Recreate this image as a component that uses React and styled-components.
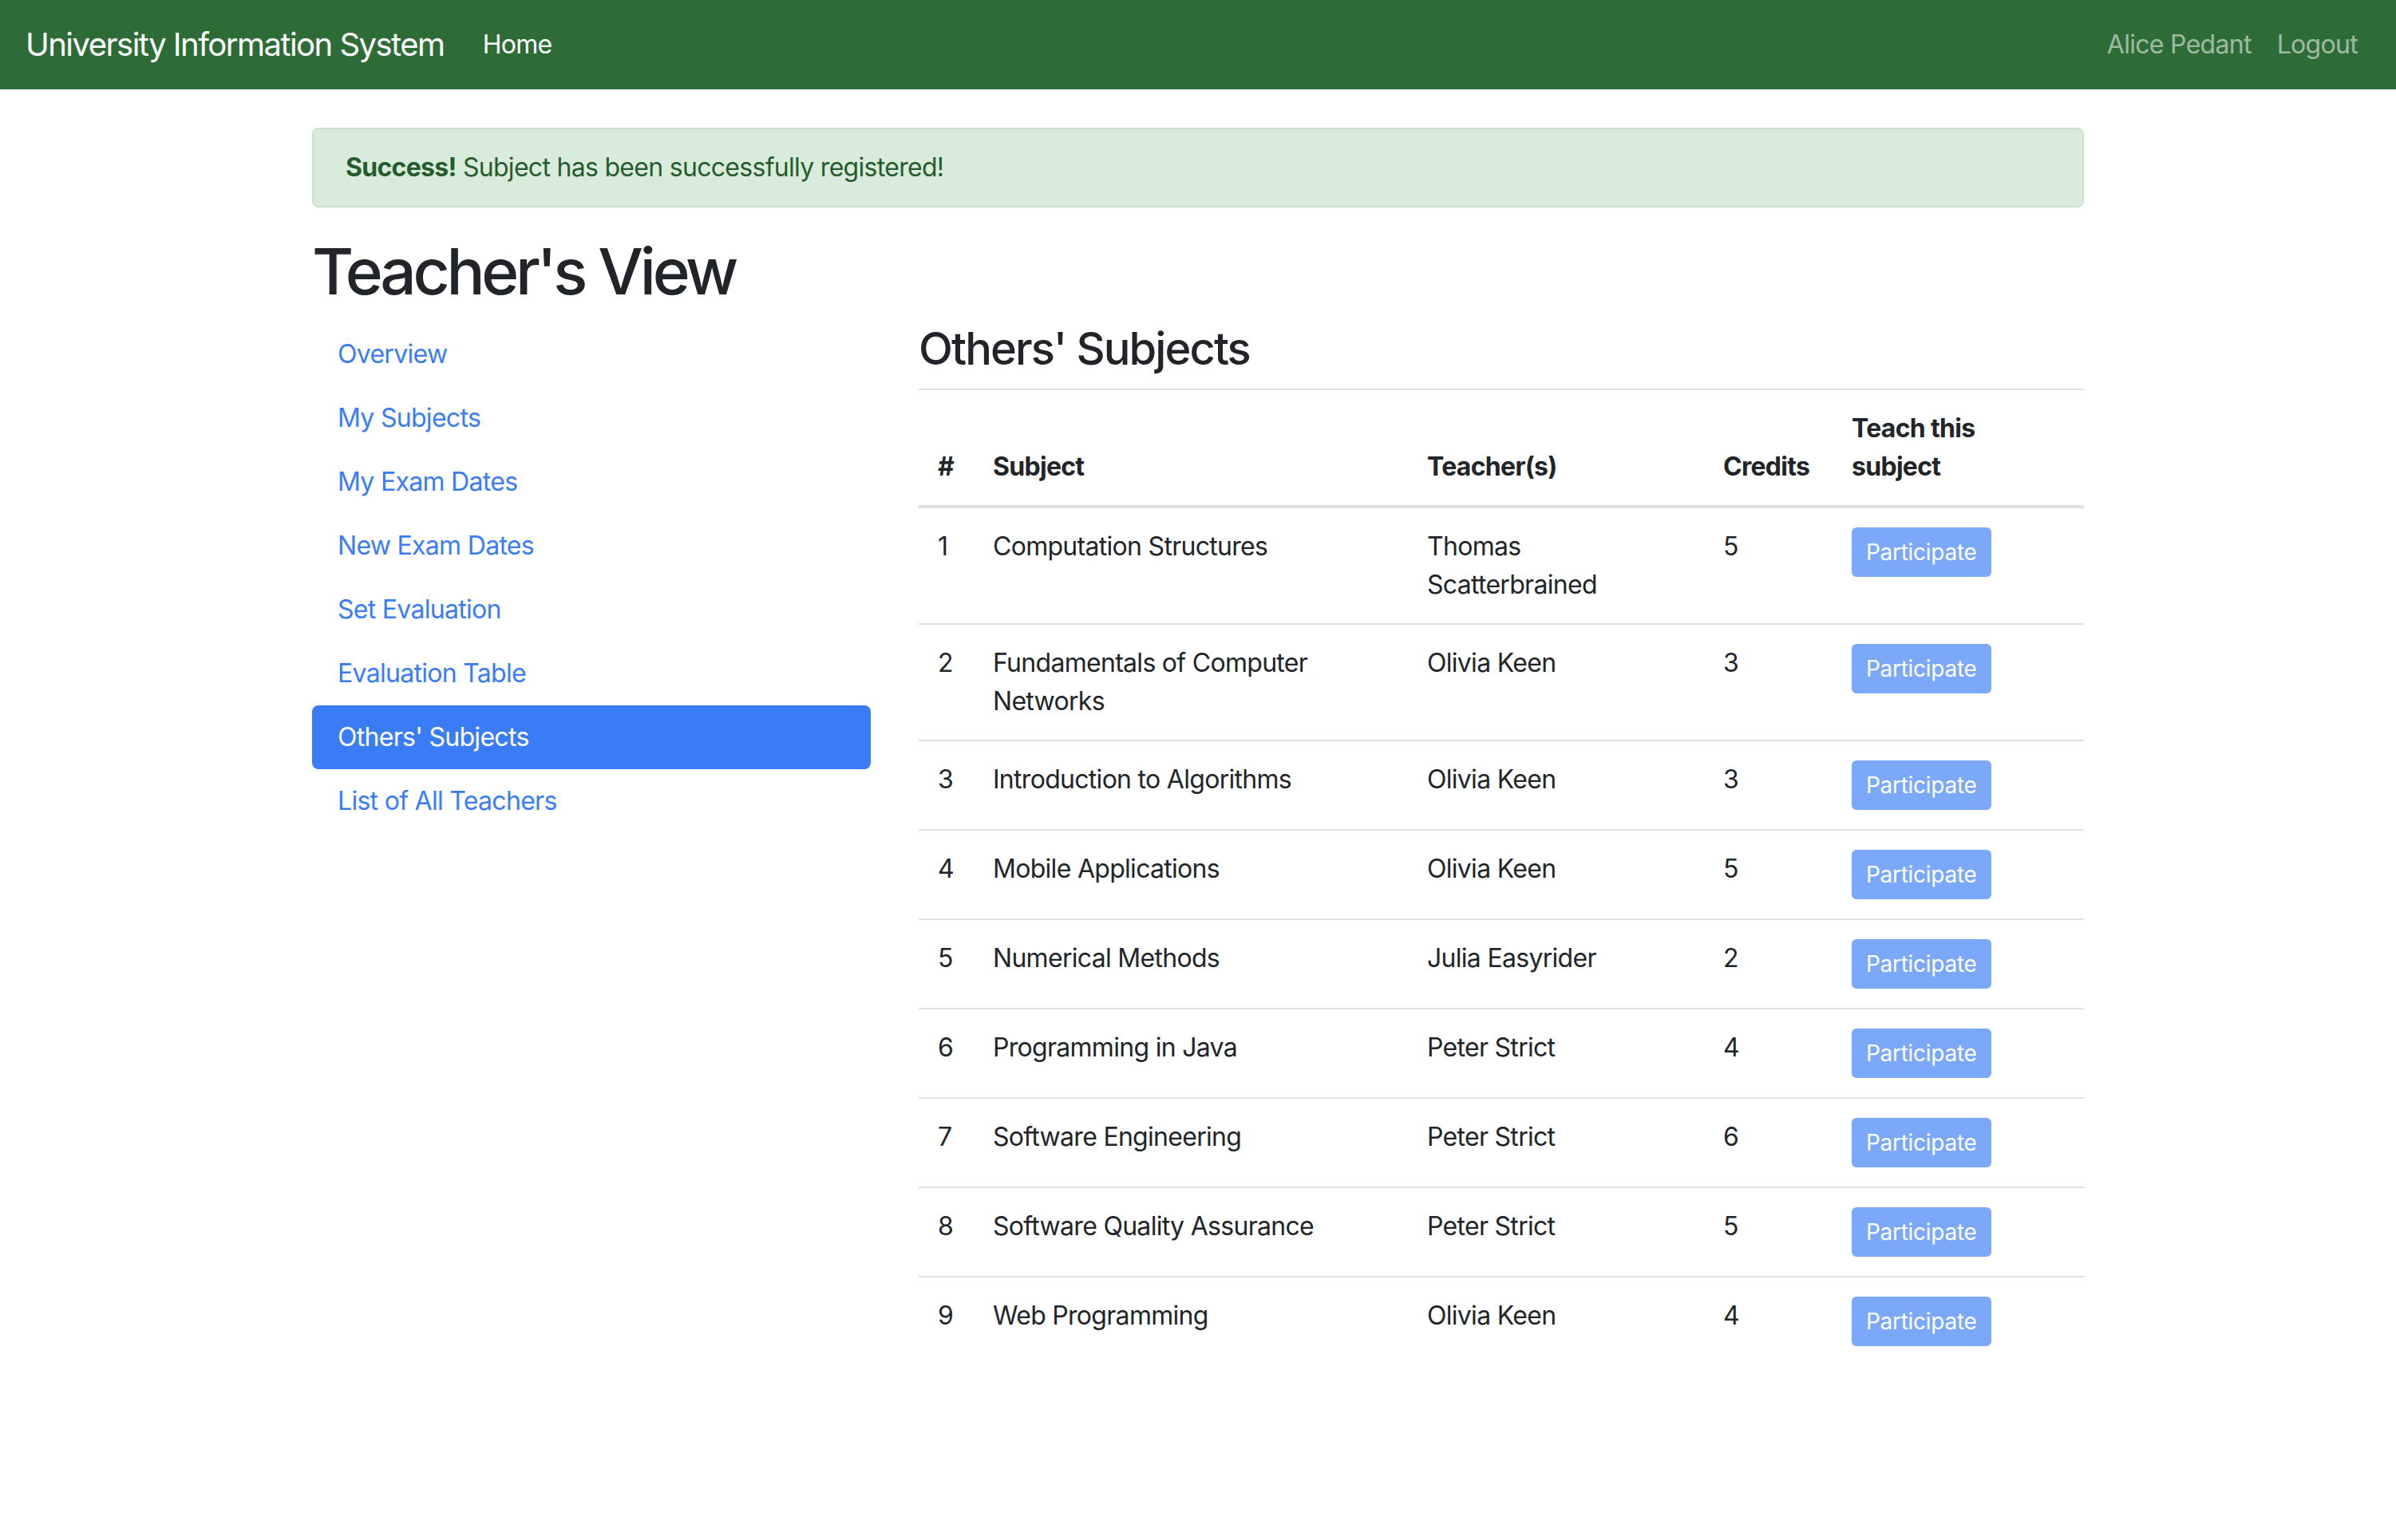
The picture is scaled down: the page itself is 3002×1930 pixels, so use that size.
import React from 'react';
import styled, { createGlobalStyle } from 'styled-components';

const colors = {
  green: '#2e6c37',
  text: '#212529',
  blue: '#3a7cf6',
  blueMuted: '#7ba8f8',
  border: '#dee2e6',
  alertBg: '#d9ecdc',
  alertBorder: '#c6e4cc',
  alertText: '#255c2e',
};

const GlobalStyle = createGlobalStyle`
  * { box-sizing: border-box; }
  body {
    margin: 0;
    background: #fff;
    color: ${colors.text};
    font-family: Inter, "Noto Sans", "Liberation Sans", sans-serif;
    font-size: 32px;
    line-height: 1.5;
    letter-spacing: -0.022em;
  }
`;

const Navbar = styled.nav`
  display: flex;
  align-items: center;
  height: 112px;
  padding: 0 32px;
  background: ${colors.green};
`;

const Brand = styled.a`
  margin-right: 32px;
  font-size: 40px;
  line-height: 1.5;
  letter-spacing: -0.038em;
  color: #fff;
  text-decoration: none;
  white-space: nowrap;
`;

const NavList = styled.div`
  display: flex;
  align-items: center;
  margin-left: ${(p) => (p.$right ? 'auto' : '0')};
`;

const NavItem = styled.a`
  padding: 0 16px;
  font-size: 32px;
  color: ${(p) => (p.$active ? '#fff' : 'rgba(255, 255, 255, 0.55)')};
  text-decoration: none;
  white-space: nowrap;
`;

const Container = styled.main`
  width: 2280px;
  margin: 0 auto;
  padding: 48px 30px 0;
`;

const Alert = styled.div`
  margin-bottom: 32px;
  padding: 24px 40px;
  border: 2px solid ${colors.alertBorder};
  border-radius: 8px;
  background: ${colors.alertBg};
  color: ${colors.alertText};

  strong {
    font-weight: 700;
  }
`;

const PageTitle = styled.h1`
  margin: 0 0 16px;
  font-size: 80px;
  font-weight: 500;
  line-height: 1.2;
  letter-spacing: -0.053em;
`;

const Row = styled.div`
  display: flex;
  margin: 0 -30px;
`;

const Col = styled.div`
  flex: 0 0 ${(p) => p.$size};
  max-width: ${(p) => p.$size};
  padding: 0 30px;
`;

const Pills = styled.div`
  display: flex;
  flex-direction: column;
`;

const Pill = styled.a`
  display: block;
  padding: 16px 32px;
  border-radius: 8px;
  color: ${(p) => (p.$active ? '#fff' : colors.blue)};
  background: ${(p) => (p.$active ? colors.blue : 'transparent')};
  text-decoration: none;
`;

const SectionTitle = styled.h3`
  margin: 0 0 16px;
  font-size: 56px;
  font-weight: 500;
  line-height: 1.2;
  letter-spacing: -0.034em;
`;

const Table = styled.table`
  width: 100%;
  margin-bottom: 32px;
  border-collapse: collapse;
  table-layout: fixed;

  th,
  td {
    padding: 24px;
    border-top: 2px solid ${colors.border};
    text-align: left;
  }

  th {
    vertical-align: bottom;
    border-bottom: 4px solid ${colors.border};
    font-weight: 700;
  }

  td {
    vertical-align: top;
  }
`;

const Button = styled.button`
  display: inline-block;
  padding: 8px 16px;
  border: 2px solid ${colors.blueMuted};
  border-radius: 6px;
  background: ${colors.blueMuted};
  color: #fff;
  font-family: inherit;
  font-size: 28px;
  line-height: 1.5;
  letter-spacing: -0.01em;
  vertical-align: top;
`;

const menu = [
  'Overview',
  'My Subjects',
  'My Exam Dates',
  'New Exam Dates',
  'Set Evaluation',
  'Evaluation Table',
  "Others' Subjects",
  'List of All Teachers',
];

const subjects = [
  ['Computation Structures', 'Thomas Scatterbrained', 5],
  ['Fundamentals of Computer Networks', 'Olivia Keen', 3],
  ['Introduction to Algorithms', 'Olivia Keen', 3],
  ['Mobile Applications', 'Olivia Keen', 5],
  ['Numerical Methods', 'Julia Easyrider', 2],
  ['Programming in Java', 'Peter Strict', 4],
  ['Software Engineering', 'Peter Strict', 6],
  ['Software Quality Assurance', 'Peter Strict', 5],
  ['Web Programming', 'Olivia Keen', 4],
];

const App = () => (
  <>
    <GlobalStyle />
    <Navbar>
      <Brand href="#">University Information System</Brand>
      <NavList>
        <NavItem href="#" $active>
          Home
        </NavItem>
      </NavList>
      <NavList $right>
        <NavItem href="#">Alice Pedant</NavItem>
        <NavItem href="#">Logout</NavItem>
      </NavList>
    </Navbar>

    <Container>
      <Alert>
        <strong>Success!</strong> Subject has been successfully registered!
      </Alert>
      <PageTitle>Teacher's View</PageTitle>

      <Row>
        <Col $size="33.3333%">
          <Pills>
            {menu.map((item) => (
              <Pill key={item} href="#" $active={item === "Others' Subjects"}>
                {item}
              </Pill>
            ))}
          </Pills>
        </Col>

        <Col $size="66.6667%">
          <SectionTitle>Others' Subjects</SectionTitle>
          <Table>
            <colgroup>
              <col style={{ width: 69 }} />
              <col style={{ width: 544 }} />
              <col style={{ width: 371 }} />
              <col style={{ width: 161 }} />
              <col style={{ width: 315 }} />
            </colgroup>
            <thead>
              <tr>
                <th>#</th>
                <th>Subject</th>
                <th>Teacher(s)</th>
                <th>Credits</th>
                <th>Teach this subject</th>
              </tr>
            </thead>
            <tbody>
              {subjects.map(([name, teacher, credits], i) => (
                <tr key={name}>
                  <td>{i + 1}</td>
                  <td>{name}</td>
                  <td>{teacher}</td>
                  <td>{credits}</td>
                  <td>
                    <Button type="button">Participate</Button>
                  </td>
                </tr>
              ))}
            </tbody>
          </Table>
        </Col>
      </Row>
    </Container>
  </>
);

export default App;
